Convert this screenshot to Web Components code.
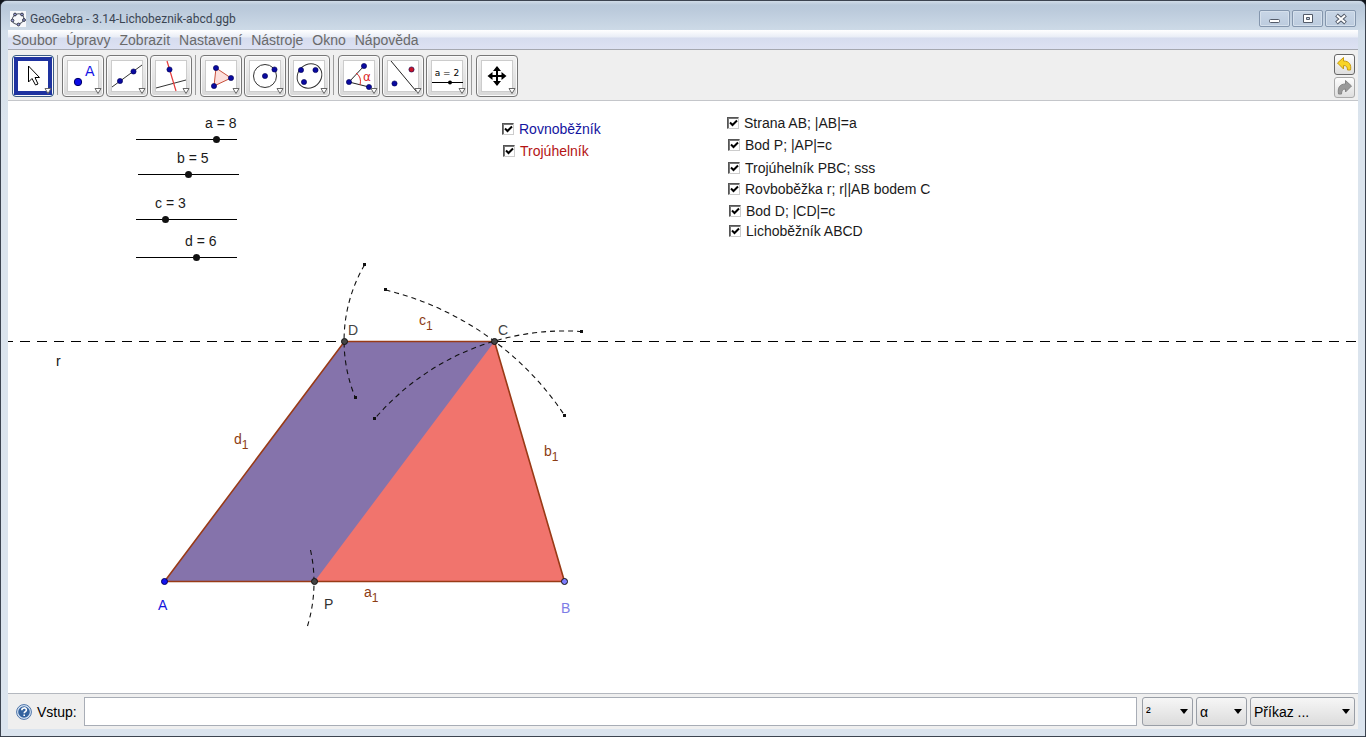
<!DOCTYPE html>
<html lang="cs">
<head>
<meta charset="utf-8">
<meta name="viewport" content="width=device-width, initial-scale=1">
<title>GeoGebra - 3.14-Lichobeznik-abcd.ggb</title>
<style>
  body { margin: 0; background: #10141a; font-family: "Liberation Sans", Arial, sans-serif; font-size: 14px; color: #1a1a1a; }
</style>
</head>
<body>
<app-window caption="GeoGebra - 3.14-Lichobeznik-abcd.ggb">
  <menu-bar slot="menu" items="Soubor,Úpravy,Zobrazit,Nastavení,Nástroje,Okno,Nápověda"></menu-bar>
  <tool-bar slot="tools">
    <tool-button icon="move" label="Ukazovátko" selected></tool-button>
    <tool-separator></tool-separator>
    <tool-button icon="point" label="Nový bod"></tool-button>
    <tool-button icon="line" label="Přímka"></tool-button>
    <tool-button icon="perpendicular" label="Kolmice"></tool-button>
    <tool-separator></tool-separator>
    <tool-button icon="polygon" label="Mnohoúhelník"></tool-button>
    <tool-button icon="circle" label="Kružnice"></tool-button>
    <tool-button icon="conic" label="Kuželosečka"></tool-button>
    <tool-separator></tool-separator>
    <tool-button icon="angle" label="Úhel"></tool-button>
    <tool-button icon="mirror" label="Osová souměrnost"></tool-button>
    <tool-button icon="slider" label="Posuvník"></tool-button>
    <tool-separator></tool-separator>
    <tool-button icon="pan" label="Posunout nákresnu"></tool-button>
    <history-buttons slot="end"></history-buttons>
  </tool-bar>
  <drawing-pad>
    <number-slider style="--x:124px;--y:13px;--label-x:73px" name="a" value="8"></number-slider>
    <number-slider style="--x:126px;--y:48px;--label-x:43px" name="b" value="5"></number-slider>
    <number-slider style="--x:124px;--y:93px;--label-x:23px" name="c" value="3"></number-slider>
    <number-slider style="--x:124px;--y:131px;--label-x:53px" name="d" value="6"></number-slider>
    <check-item style="--x:494px;--y:20px;color:#1414a0">Rovnoběžník</check-item>
    <check-item style="--x:495px;--y:42px;color:#b41414">Trojúhelník</check-item>
    <check-item style="--x:719px;--y:14px">Strana AB; |AB|=a</check-item>
    <check-item style="--x:720px;--y:36px">Bod P; |AP|=c</check-item>
    <check-item style="--x:720px;--y:59px">Trojúhelník PBC; sss</check-item>
    <check-item style="--x:720px;--y:80px">Rovboběžka r; r||AB bodem C</check-item>
    <check-item style="--x:721px;--y:102px">Bod D; |CD|=c</check-item>
    <check-item style="--x:721px;--y:122px">Lichoběžník ABCD</check-item>
  </drawing-pad>
  <input-bar slot="input"></input-bar>
</app-window>

<script>
class Base extends HTMLElement {
  connectedCallback() {
    if (this.shadowRoot) return;
    const root = this.attachShadow({ mode: 'open' });
    const t = document.createElement('template');
    t.innerHTML = this.markup();
    root.append(t.content.cloneNode(true));
  }
}

customElements.define('app-window', class extends Base {
  markup() { return `
<style>
  :host { display: flex; flex-direction: column; box-sizing: border-box; min-height: 100vh; padding: 0 7px 7px;
    border: 1px solid #3c4450; border-radius: 7px 7px 0 0; background: linear-gradient(#b9c9dc, #d3deea 30px, #dbe4ed 120px, #dbe4ee); overflow: hidden; }
  header { display: flex; align-items: center; gap: 4px; height: 29px; box-sizing: border-box; margin: 0 -7px; padding: 6px 9px 0 9px;
    background: linear-gradient(#d0dce8, #b9c9da 4px, #bccbdc 10px, #cddae7); }
  h1 { flex: 1; margin: 0; font: 12px/16px Roboto, "Open Sans", sans-serif; color: #3b4553; white-space: nowrap; }
  .ctl { display: flex; gap: 2px; }
  button { width: 31px; height: 17px; padding: 0; display: grid; place-items: center; border: 1px solid #8496ad; border-radius: 2px;
    background: linear-gradient(#c8d6e6, #bccbde); box-shadow: inset 0 0 0 1px #d5e0ec; }
  svg { display: block; }
  .body { flex: 1; display: flex; flex-direction: column; min-width: 0; }
</style>
<header>
  <svg width="16" height="16" viewBox="0 0 16 16"><rect width="16" height="16" fill="#f7f8fb"/><ellipse cx="8" cy="8" rx="6" ry="5" fill="none" stroke="#555b68" transform="rotate(-25 8 8)"/><g fill="#9a9ad6" stroke="#333946"><circle cx="5" cy="3.500" r="1.400"/><circle cx="12" cy="3.500" r="1.400"/><circle cx="14" cy="9" r="1.400"/><circle cx="8.500" cy="13.500" r="1.400"/><circle cx="2.500" cy="9.500" r="1.400"/></g></svg>
  <h1>${this.getAttribute('caption')}</h1>
  <div class="ctl">
    <button aria-label="Minimalizovat"><svg width="14" height="12"><rect x="1.500" y="6.500" width="10" height="3" rx="1" fill="#fff" stroke="#535b69"/></svg></button>
    <button aria-label="Maximalizovat"><svg width="14" height="12"><path d="M2.500 1.500h9v8h-9zM5.500 4.500v2h3v-2z" fill="#fff" fill-rule="evenodd" stroke="#535b69"/></svg></button>
    <button aria-label="Zavřít"><svg width="14" height="12"><path d="M2.500 2l9 8M11.500 2l-9 8" stroke="#535b69" stroke-width="4"/><path d="M3 2.500l8 7M11 2.500l-8 7" stroke="#fff" stroke-width="2"/></svg></button>
  </div>
</header>
<div class="body"><slot name="menu"></slot><slot name="tools"></slot><slot></slot><slot name="input"></slot></div>`; }
});

customElements.define('menu-bar', class extends Base {
  markup() { return `
<style>
  :host { display: block; height: 20px; box-sizing: border-box; border-bottom: 1px solid #a5a8b0; background: linear-gradient(#fff, #e9edf6 7px, #d6dcee 8px, #dde2f3); }
  nav { display: flex; gap: 9px; padding-left: 4px; }
  button { border: 0; padding: 0; background: none; font: inherit; line-height: 20px; height: 19px; color: #6a6a6a; white-space: nowrap; }
</style>
<nav>${this.getAttribute('items').split(',').map(i => `<button>${i}</button>`).join('')}</nav>`; }
});

customElements.define('tool-bar', class extends Base {
  markup() { return `
<style>
  :host { display: flex; justify-content: space-between; align-items: center; height: 51px; box-sizing: border-box; padding: 2px 3px 0 4px;
    background: #efefef; border-bottom: 1px solid #c4c6ca; }
  .set { display: flex; gap: 2px; }
</style>
<div class="set" role="toolbar"><slot></slot></div><slot name="end"></slot>`; }
});

customElements.define('tool-separator', class extends Base {
  markup() { return `<style>:host { display: block; width: 4px; height: 40px; background: linear-gradient(#9c9c9c, #9c9c9c) 1px 0 / 1px 100% no-repeat; }</style>`; }
});

const dot = (x, y, c = '#0a0aa0') => `<circle cx="${x}" cy="${y}" r="2.600" fill="${c}" stroke="#000050" stroke-width=".6"/>`;
const ICONS = {
  move: `<path d="M11.500 6v16l3.500-3.500 3.500 6.500 2.500-1-3-6.500h4.500z" fill="#fff" stroke="#000"/>`,
  point: `<circle cx="11" cy="22" r="3.700" fill="#0a0ae6" stroke="#000064"/><text x="18" y="16" font-size="14" fill="#1414e6">A</text>`,
  line: `<path d="M1 27L31 5" stroke="#333"/>${dot(9, 21)}${dot(22.5, 11.500)}`,
  perpendicular: `<path d="M1 28L31 20" stroke="#333"/><path d="M12 1l9 30" stroke="#e63c3c" stroke-width="1.200"/>${dot(14.500, 9.500)}`,
  polygon: `<path d="M11 8L26 18 9 26z" fill="#fde0dc" stroke="#c8503c"/>${dot(11, 8)}${dot(26, 18)}${dot(9, 26)}`,
  circle: `<circle cx="16" cy="16" r="11.500" fill="none" stroke="#333"/>${dot(16, 16)}${dot(25.500, 9.500)}`,
  conic: `<ellipse cx="16.500" cy="16" rx="13" ry="11.500" transform="rotate(-42 16.500 16)" fill="none" stroke="#333"/>${dot(8, 10)}${dot(22.500, 10)}${dot(11, 22)}`,
  angle: `<path d="M26 27L6 22 21 6" fill="none" stroke="#222"/><path d="M13 13q6 4 4 12" fill="none" stroke="#dc2828"/><text x="20" y="21" font-size="12" fill="#dc2828">α</text>${dot(21, 6)}${dot(6, 22)}${dot(26, 27)}`,
  mirror: `<path d="M4 1L29 31" stroke="#222"/>${dot(24.500, 9.500, '#c81428')}${dot(7.500, 23.500)}`,
  slider: `<text x="16" y="16" font-size="9" text-anchor="middle" fill="#000">a = 2</text><path d="M1 22.500h31" stroke="#000"/><circle cx="19" cy="22.500" r="2" fill="#000"/>`,
  pan: `<path d="M16 9v14M9 16h14" stroke="#000" stroke-width="2"/><path d="M16 6l4 5h-8zM16 26l4-5h-8zM6.500 16l5-4v8zM25.500 16l-5-4v8z"/>`
};
customElements.define('tool-button', class extends Base {
  markup() { return `
<style>
  :host { display: block; }
  button { position: relative; display: grid; place-items: center; width: 42px; height: 42px; padding: 0; border: 1px solid #777; border-radius: 4px;
    background: linear-gradient(#f2f2f2, #d8d8d8); box-shadow: inset 0 0 0 1px #fafafa; }
  .pic { background: #fff; box-shadow: inset 0 0 0 1px #ccc; overflow: hidden; font-family: "DejaVu Sans", sans-serif; }
  .menu { position: absolute; right: 1px; bottom: 1px; }
  :host([selected]) button { border-color: #3c5c84; background: #6f9ccd; }
  :host([selected]) .pic { box-shadow: inset 0 0 0 1px #1e32a0, 0 0 0 3px #1e32a0; }
</style>
<button aria-label="${this.getAttribute('label')}">
  <svg class="pic" width="32" height="32">${ICONS[this.getAttribute('icon')]}</svg>
  <svg class="menu" width="8" height="8"><path d="M1 1.500h6l-3 5z" fill="#fff" stroke="#666"/></svg>
</button>`; }
});

customElements.define('history-buttons', class extends Base {
  markup() { return `
<style>
  :host { display: grid; gap: 2px; }
  button { width: 21px; height: 21px; padding: 0; display: grid; place-items: center; border: 1px solid #666; border-radius: 3px; background: linear-gradient(#fdfdfd, #dedede); }
  button:disabled { border-color: #aaa; }
</style>
<button aria-label="Zpět"><svg width="17" height="17"><path d="M1.500 7l6-5.500v3.500c6 0 8 4 7 9h-3c0-3-1-4.500-4-4.500v3.500z" fill="#f8d426" stroke="#c89b10"/></svg></button>
<button disabled aria-label="Znovu"><svg width="17" height="17"><path d="M15.500 7l-6-5.500v3.500c-6 0-8 4-7 10h3c0-3 1-5 4-5v3z" fill="#999" stroke="#858585"/></svg></button>`; }
});

customElements.define('drawing-pad', class extends Base {
  markup() {
    const tip = (x, y) => `<rect x="${x - 1}" y="${y - 1}" width="3" height="3" fill="#111"/>`;
    const name = (x, y, t, c) => `<text x="${x}" y="${y}" fill="${c}">${t}</text>`;
    const side = (x, y, t) => `<text x="${x}" y="${y}" fill="#8c3c14">${t}<tspan dy="5" font-size="12">1</tspan></text>`;
    return `
<style>
  :host { position: relative; display: block; flex: 1; min-height: 540px; background: #fff; overflow: hidden; }
  svg { position: absolute; inset: 0; width: 100%; height: 100%; font-size: 14px; }
</style>
<svg role="img" aria-label="Lichoběžník ABCD">
  <line x1="-5" y1="240.500" x2="100%" y2="240.500" stroke="#000" stroke-dasharray="10 7"/>
  <path d="M156.500 480.500L336.500 240.500H486.500L556.500 480.500z" fill="#8573ab"/>
  <path d="M306.500 480.500L486.500 240.500 556.500 480.500z" fill="#f1746d"/>
  <path d="M156.500 480.500L336.500 240.500H486.500L556.500 480.500z" fill="none" stroke="#993a16" stroke-width="1.600"/>
  <g fill="none" stroke="#111" stroke-width="1.100" stroke-dasharray="5 4">
    <path d="M302.500 449A150 150 0 0 1 299.500 525"/>
    <path d="M377.500 189A300 300 0 0 1 557 315"/>
    <path d="M574 230.500A250 250 0 0 0 367 317.500"/>
    <path d="M356.500 164A150 150 0 0 0 347.500 297"/>
  </g>
  ${tip(377, 188)}${tip(556, 314)}${tip(573, 230)}${tip(366, 317)}${tip(356, 163)}${tip(347, 296)}
  <g stroke="#111"><circle cx="156.500" cy="480.500" r="3" fill="#1414f0" stroke="#000064"/><circle cx="306.500" cy="480.500" r="3" fill="#444"/>
  <circle cx="556.500" cy="480.500" r="3" fill="#7d7dff"/><circle cx="336.500" cy="240.500" r="3" fill="#444"/><circle cx="486.500" cy="240.500" r="3" fill="#444"/></g>
  ${name(150, 509, 'A', '#1414dc')}${name(553, 512, 'B', '#7d7de6')}${name(490, 234, 'C', '#444')}${name(340, 234, 'D', '#444')}${name(316, 508, 'P', '#333')}${name(48, 265, 'r', '#111')}
  ${side(356, 496, 'a')}${side(536, 355, 'b')}${side(411, 224, 'c')}${side(226, 343, 'd')}
</svg>
<slot></slot>`; }
});

customElements.define('number-slider', class extends Base {
  markup() {
    const n = this.getAttribute('name'), v = this.getAttribute('value');
    return `
<style>
  :host { position: absolute; left: var(--x); top: var(--y); width: 109px; }
  label { display: block; margin-left: var(--label-x); line-height: 18px; white-space: nowrap; }
  input { display: block; appearance: none; width: 108px; height: 15px; margin: 0; background: linear-gradient(#000, #000) 4px 7px / 101px 1px no-repeat; }
  input::-webkit-slider-thumb { appearance: none; width: 7px; height: 7px; border-radius: 50%; background: #111; }
  input::-moz-range-thumb { width: 7px; height: 7px; border: 0; border-radius: 50%; background: #111; }
</style>
<label for="v">${n} = ${v}</label><input id="v" type="range" min="0" max="10" value="${v}">`; }
  connectedCallback() {
    super.connectedCallback();
    const label = this.shadowRoot.querySelector('label');
    this.shadowRoot.querySelector('input').oninput = e => { label.textContent = `${this.getAttribute('name')} = ${e.target.value}`; };
  }
});

customElements.define('check-item', class extends Base {
  markup() { return `
<style>
  :host { position: absolute; left: var(--x); top: var(--y); }
  label { display: flex; align-items: center; gap: 5px; line-height: 16px; white-space: nowrap; }
  .box { position: relative; display: grid; }
  input { appearance: none; box-sizing: border-box; width: 12px; height: 12px; margin: 0; background: #fff; border: 1px solid; border-color: #555 #ccc #ccc #555; box-shadow: inset 1px 1px #777; }
  svg { position: absolute; inset: 0; pointer-events: none; visibility: hidden; }
  input:checked + svg { visibility: visible; }
</style>
<label><span class="box"><input type="checkbox" checked><svg width="12" height="12"><path d="M3 5.500l2.500 2.500L10 3.500" fill="none" stroke="#000" stroke-width="2"/></svg></span><span><slot></slot></span></label>`; }
});

customElements.define('input-bar', class extends Base {
  markup() {
    const pick = (cls, label, text) => `<span class="pick ${cls}"><select aria-label="${label}"><option>${text}</option></select><svg width="8" height="5"><path d="M0 0h8L4 5z"/></svg></span>`;
    return `
<style>
  :host { display: flex; align-items: center; gap: 5px; height: 36px; box-sizing: border-box; padding: 0 3px 0 8px; border-top: 1px solid #b4b8bf; background: #efefef; color: #000; }
  label { white-space: nowrap; margin-right: 2px; }
  input { flex: 1; min-width: 80px; height: 29px; box-sizing: border-box; border: 1px solid #a8adb6; background: #fff; font: inherit; padding: 0 4px; }
  .help { display: block; border: 0; padding: 0; background: none; height: 16px; }
  .picks { display: flex; gap: 3px; }
  .pick { position: relative; display: block; width: 51px; }
  .pick.wide { width: 105px; }
  select { appearance: none; width: 100%; height: 29px; box-sizing: border-box; border: 1px solid #999ea6; border-radius: 3px; background: linear-gradient(#f6f6f6, #dcdcdc); font: inherit; color: #000; padding: 0 3px; }
  .pick svg { position: absolute; right: 5px; top: 12px; pointer-events: none; }
</style>
<button class="help" aria-label="Nápověda"><svg width="16" height="16"><circle cx="8" cy="8" r="7.400" fill="#dce8f6" stroke="#4a72a8"/><circle cx="8" cy="8" r="5.800" fill="#34639f"/><path d="M5.800 6.200c0-3 4.600-3 4.600-.2 0 1.600-2.200 1.600-2.200 3.200M8.200 10.500v1.600" fill="none" stroke="#fff" stroke-width="1.600"/></svg></button>
<label for="cmd">Vstup:</label><input id="cmd" type="text">
<div class="picks">${pick('', 'Mocnina', '²')}${pick('', 'Symbol', 'α')}${pick('wide', 'Příkaz', 'Příkaz ...')}</div>`; }
});
</script>
</body>
</html>
